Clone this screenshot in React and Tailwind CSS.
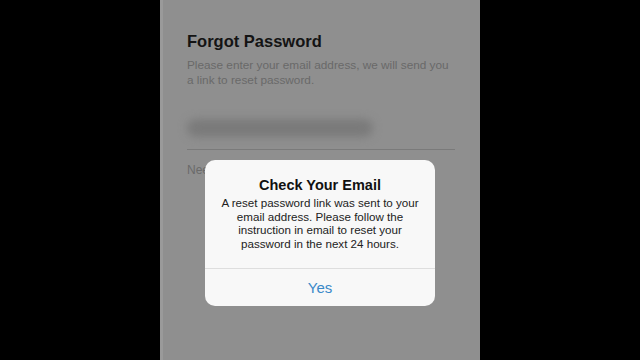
import React from "react";

const ForgotPassword = () => {
  return (
    <div className="relative w-[320px] h-[360px] bg-[#8f8f8f] border-l-[3px] border-[#9a9a9a] overflow-hidden">
      {/* Page behind the dim overlay */}
      <div className="pl-[24px] pr-[24px] pt-[30px]">
        <h1 className="text-[16.5px] font-bold text-[#141414] leading-[22px]">
          Forgot Password
        </h1>
        <p className="mt-[6px] w-[264px] text-[11.8px] leading-[14.5px] text-[#696969]">
          Please enter your email address, we will send you a link to reset password.
        </p>

        {/* blurred email field */}
        <div className="mt-[32px] ml-[0px] w-[186px] h-[18px] rounded-full bg-[#7a7a7a] blur-[4px]" />

        <div className="mt-[12px] h-[1px] w-[268px] bg-[#7a7a7a]" />

        <p className="mt-[11px] text-[12px] text-[#6a6a6a]">Need help?</p>
      </div>

      {/* Alert */}
      <div className="absolute left-[42px] top-[160px] w-[230px] rounded-[10px] bg-[#f8f8f8] flex flex-col items-center">
        <h2 className="mt-[16px] text-[14.5px] font-bold text-[#111] leading-[18px]">
          Check Your Email
        </h2>
        <p className="mt-[2px] px-[10px] text-center text-[11.6px] leading-[13.6px] text-[#222]">
          A reset password link was sent to your email address. Please follow the
          instruction in email to reset your password in the next 24 hours.
        </p>
        <div className="mt-[18px] h-[1px] w-full bg-[#dedede]" />
        <button className="h-[37px] w-full text-[15px] text-[#3a89c9]">Yes</button>
      </div>
    </div>
  );
};

export default function App() {
  return (
    <div
      className="w-[640px] h-[360px] bg-black flex justify-center"
      style={{ fontFamily: '"Liberation Sans", Arial, sans-serif' }}
    >
      <ForgotPassword />
    </div>
  );
}
